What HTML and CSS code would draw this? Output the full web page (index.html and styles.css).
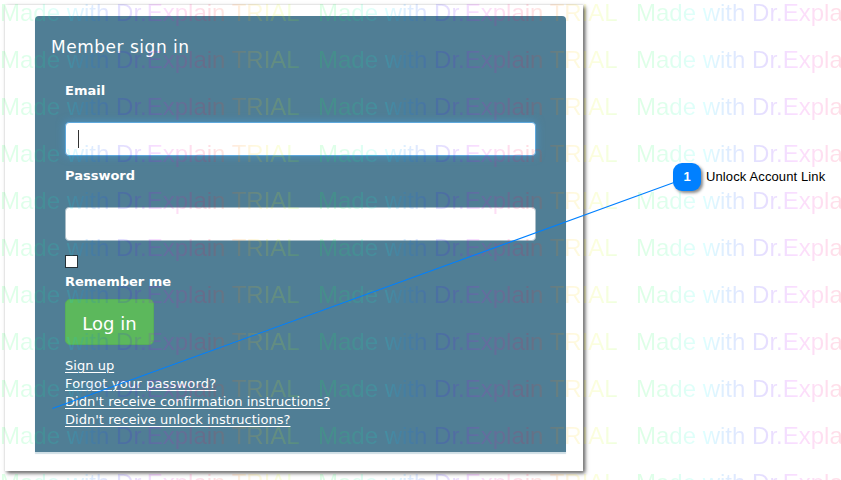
FILE: index.html
```
<!DOCTYPE html>
<html lang="en">
<head>
<meta charset="utf-8">
<title>Member sign in</title>
<link rel="stylesheet" href="styles.css">
</head>
<body>
<main class="page">
  <section class="shot">
    <form class="panel">
      <h1 class="title">Member sign in</h1>
      <div class="fields">
        <label class="label">Email</label>
        <div class="input focused"><span class="caret"></span></div>
        <label class="label second">Password</label>
        <div class="input"></div>
        <span class="check"></span>
        <label class="label remember">Remember me</label>
        <button class="login" type="button">Log in</button>
        <nav class="links">
          <a>Sign up</a>
          <a class="forgot">Forgot your password?</a>
          <a>Didn't receive confirmation instructions?</a>
          <a>Didn't receive unlock instructions?</a>
        </nav>
      </div>
    </form>
  </section>
  <aside class="note"><span class="badge">1</span><span class="note-text">Unlock Account Link</span></aside>
</main>
<div class="watermark" aria-hidden="true"></div>
<svg class="leader" width="841" height="480" viewBox="0 0 841 480"><path d="M52.5 408.5L674 182.500" stroke="#0080ff" stroke-width="1.1" fill="none"/></svg>
<script src="script.js"></script>
</body>
</html>
```
FILE: styles.css
```
* { box-sizing: border-box; }
body { margin: 0; width: 841px; height: 480px; overflow: hidden; position: relative; background: #fff; font-family: "DejaVu Sans", sans-serif; }
.page { display: flex; align-items: flex-start; padding: 5px 0 0 5px; }
.shot { width: 578px; height: 466px; flex: none; padding: 11px 17px 0 30px; background: #fff; box-shadow: 0 0 1px #ccc, 2px 2px 4px rgba(0,0,0,.7); }
.panel { height: 436px; padding: 19px 30px 0 16px; background: #507e95; border-radius: 4px 4px 0 0; box-shadow: 0 2px 1px #cfdee5; color: #fff; }
.title { margin: 0; font-size: 17px; line-height: 24px; font-weight: 400; letter-spacing: .52px; white-space: nowrap; }
.fields { display: flex; flex-direction: column; align-items: flex-start; padding: 23px 0 0 14px; }
.label { font-size: 13px; line-height: 18px; font-weight: 700; white-space: nowrap; }
.input { width: 471px; height: 34px; margin-top: 22px; padding: 7px 12px; background: #fff; border: 1px solid #a9bdc8; border-radius: 4px; }
.focused { border-color: #5fa8dc; box-shadow: 0 0 8px rgba(74,155,212,.75); }
.caret { display: block; width: 1px; height: 18px; background: #333; }
.second { margin-top: 11px; }
.check { width: 13px; height: 13px; margin-top: 14px; border: 1px solid #263238; background: #fff; }
.remember { margin-top: 5px; }
.login { width: 89px; height: 46px; margin-top: 8px; padding: 3px 0 0; border: 1px solid #57ad5b; border-radius: 5px; background: #5cb85c; color: #fff; font: 18px/40px "DejaVu Sans", sans-serif; }
.links { display: flex; flex-direction: column; align-items: flex-start; margin-top: 12px; font-size: 13px; line-height: 18px; letter-spacing: .03px; }
.links a { text-decoration: underline; text-underline-offset: 2px; text-decoration-thickness: 1px; white-space: nowrap; }
.links .forgot { letter-spacing: .18px; }
.note { display: flex; align-items: center; margin: 158px 0 0 90px; font: 13px/28px "Liberation Sans", sans-serif; color: #000; white-space: nowrap; }
.badge { width: 28px; height: 28px; border-radius: 9px; background: #0080ff; color: #fff; font-weight: 700; text-align: center; box-shadow: 2px 2px 3px rgba(0,0,0,.45); }
.note-text { margin-left: 5px; letter-spacing: .12px; }
.watermark { position: absolute; inset: 0; overflow: hidden; opacity: .125; pointer-events: none; }
.mark-row { display: flex; height: 47px; }
.mark { flex: none; width: 318px; font: 24px/26px "Liberation Sans", sans-serif; white-space: nowrap; color: transparent; background: linear-gradient(90deg, #00ff40 0, #00ff60 25px, #00ffff 68px, #0080ff 88px, #2020ff 115px, #4000ff 130px, #e000ff 160px, #ff0080 190px, #ff0030 210px, #ff8000 238px, #ffd000 255px, #e0ff00 280px, #80ff00 300px, #00ff40 318px); -webkit-background-clip: text; background-clip: text; }
.leader { position: absolute; left: 0; top: 0; }
```
FILE: script.js
```
const watermark = document.querySelector('.watermark');
for (let r = 0; r < 11; r++) {
  const row = document.createElement('div');
  row.className = 'mark-row';
  for (let c = 0; c < 3; c++) {
    const mark = document.createElement('span');
    mark.className = 'mark';
    mark.textContent = 'Made with Dr.Explain TRIAL';
    row.append(mark);
  }
  watermark.append(row);
}
```
